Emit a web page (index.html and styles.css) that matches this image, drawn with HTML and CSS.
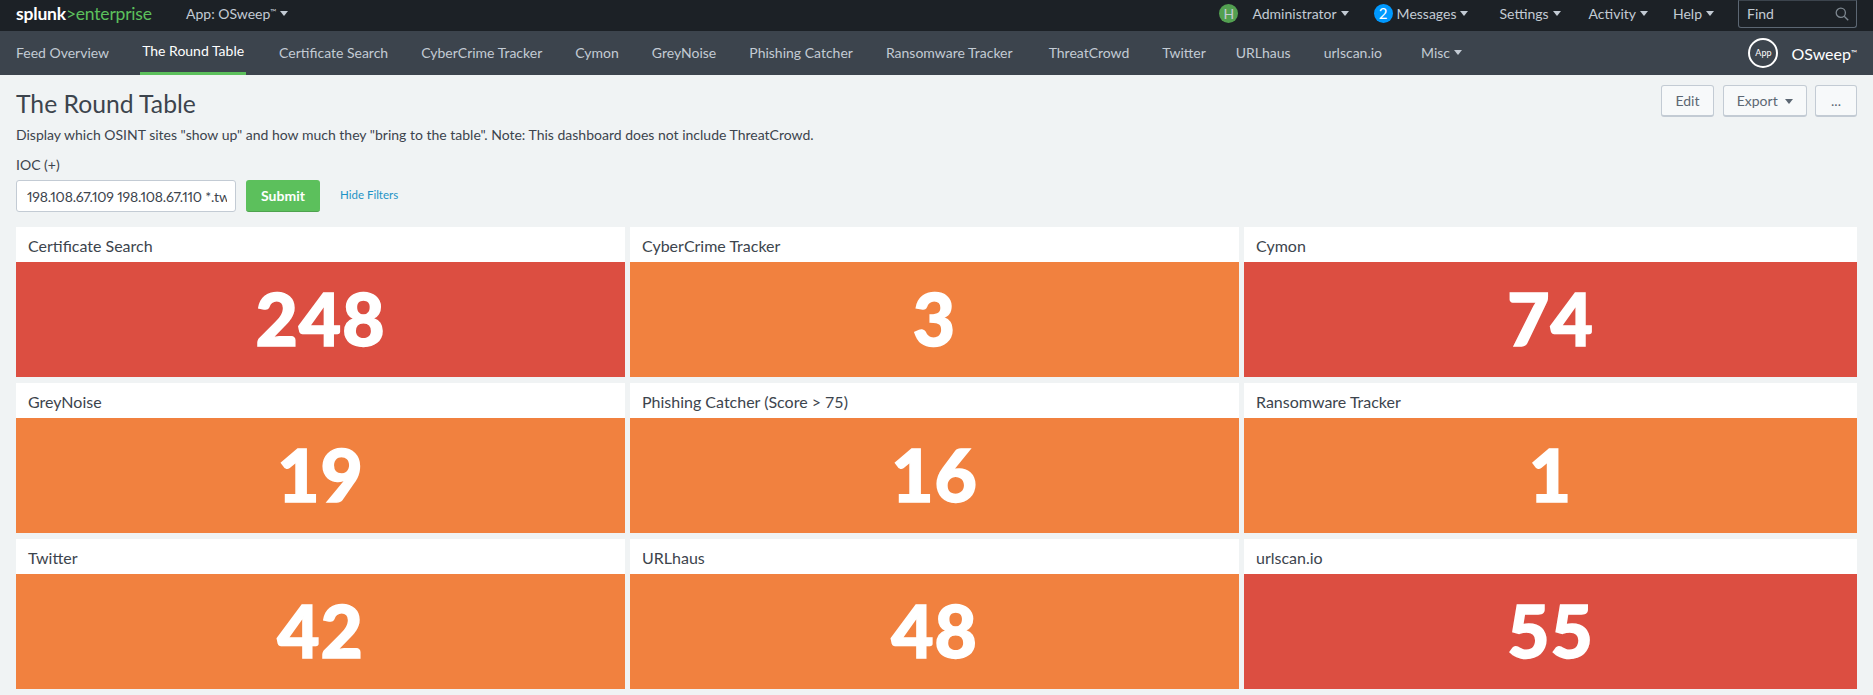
FILE: index.html
```html
<!DOCTYPE html>
<html lang="en">
<head>
  <meta charset="UTF-8" />
  <title>The Round Table | Splunk</title>
  <link rel="stylesheet" href="styles.css">
</head>
<body>
  <header class="topbar">
    <div class="brand"><span class="brand-splunk">splunk</span><span class="brand-rest">&gt;enterprise</span></div>
    <div class="top-item app-menu"><span>App: OSweep<span class="tm">™</span></span><i class="caret"></i></div>
    <div class="top-right">
      <div class="top-item user"><span class="avatar">H</span>Administrator<i class="caret"></i></div>
      <div class="top-item messages"><span class="badge">2</span>Messages<i class="caret"></i></div>
      <div class="top-item">Settings<i class="caret"></i></div>
      <div class="top-item activity">Activity<i class="caret"></i></div>
      <div class="top-item help">Help<i class="caret"></i></div>
      <div class="find">
        <span>Find</span>
        <svg width="14" height="14" viewBox="0 0 14 14" fill="none" stroke="#7d8790" stroke-width="1.3"><circle cx="5.8" cy="5.8" r="4.6"/><path d="M9.2 9.2l4 4"/></svg>
      </div>
    </div>
  </header>

  <nav class="appbar">
    <a>Feed Overview</a>
    <a class="active">The Round Table</a>
    <a>Certificate Search</a>
    <a>CyberCrime Tracker</a>
    <a>Cymon</a>
    <a>GreyNoise</a>
    <a>Phishing Catcher</a>
    <a class="wide">Ransomware Tracker</a>
    <a>ThreatCrowd</a>
    <a class="narrow">Twitter</a>
    <a>URLhaus</a>
    <a>urlscan.io</a>
    <a class="misc">Misc<i class="caret"></i></a>
    <div class="app-label"><span class="app-icon">App</span><span>OSweep<span class="tm">™</span></span></div>
  </nav>

  <main class="content">
    <div class="head-row">
      <div>
        <h1>The Round Table</h1>
        <p class="desc">Display which OSINT sites "show up" and how much they "bring to the table". Note: This dashboard does not include ThreatCrowd.</p>
      </div>
      <div class="actions">
        <button class="btn edit">Edit</button>
        <button class="btn export">Export <i class="caret dark"></i></button>
        <button class="btn more">...</button>
      </div>
    </div>

    <label class="ioc-label" for="ioc">IOC (+)</label>
    <div class="filters">
      <input id="ioc" type="text" value="198.108.67.109 198.108.67.110 *.twitter.com" />
      <button class="submit">Submit</button>
      <a class="hide-link">Hide Filters</a>
    </div>

    <section class="grid">
      <div class="panel"><h2>Certificate Search</h2><div class="value red">248</div></div>
      <div class="panel"><h2>CyberCrime Tracker</h2><div class="value orange">3</div></div>
      <div class="panel"><h2>Cymon</h2><div class="value red">74</div></div>
      <div class="panel"><h2>GreyNoise</h2><div class="value orange">19</div></div>
      <div class="panel"><h2>Phishing Catcher (Score &gt; 75)</h2><div class="value orange">16</div></div>
      <div class="panel"><h2>Ransomware Tracker</h2><div class="value orange">1</div></div>
      <div class="panel"><h2>Twitter</h2><div class="value orange">42</div></div>
      <div class="panel"><h2>URLhaus</h2><div class="value orange">48</div></div>
      <div class="panel"><h2>urlscan.io</h2><div class="value red">55</div></div>
    </section>
  </main>
</body>
</html>
```

FILE: styles.css
```css
* {
  box-sizing: border-box;
}
html, body {
  margin: 0;
  height: 100%;
}
body {
  background: #f0f3f4;
  color: #3c444d;
  font-family: Lato, "Open Sans", sans-serif;
  font-size: 14px;
  overflow: hidden;
}
.tm {
  position: relative;
  top: -4px;
  font-size: 8px;
}
.caret {
  display: inline-block;
  width: 0;
  height: 0;
  margin-left: 4px;
  vertical-align: 2px;
  border-left: 4px solid transparent;
  border-right: 4px solid transparent;
  border-top: 5px solid #c3cbd4;
}
.caret.dark {
  border-top-color: #5c6773;
}

/* top black bar */
.topbar {
  display: flex;
  align-items: center;
  height: 31px;
  padding: 0 16px 4px;
  background: #1c2126;
  color: #c3cbd4;
}
.brand {
  width: 170px;
  font-size: 17.5px;
  letter-spacing: -0.2px;
}
.brand-splunk {
  color: #fff;
  font-weight: 700;
}
.brand-rest {
  color: #5cc05c;
}
.top-right {
  display: flex;
  align-items: center;
  margin-left: auto;
}
.top-item {
  display: flex;
  align-items: center;
  white-space: nowrap;
}
.top-right .top-item {
  margin-right: 28px;
}
.top-right .top-item.user,
.top-right .top-item.activity {
  margin-right: 25px;
}
.top-right .top-item.messages {
  margin-right: 31px;
}
.top-right .top-item.help {
  margin-right: 24px;
}
.avatar, .badge {
  display: inline-block;
  width: 19px;
  height: 19px;
  border-radius: 50%;
  line-height: 19px;
  text-align: center;
}
.avatar {
  margin-right: 14px;
  background: #53a051;
  color: #c3cbd4;
}
.badge {
  margin-right: 4px;
  background: #0099ff;
  color: #fff;
  font-size: 15px;
}
.find {
  display: flex;
  align-items: center;
  justify-content: space-between;
  width: 119px;
  height: 28px;
  padding: 0 7px 0 8px;
  border: 1px solid #5c6773;
  border-top-color: #3c444d;
  border-radius: 0 0 3px 3px;
}

/* app nav */
.appbar {
  display: flex;
  align-items: stretch;
  height: 44px;
  padding: 0 16px;
  background: #3c444d;
  color: #c3cbd4;
}
.appbar a {
  display: flex;
  align-items: center;
  margin-right: 33px;
  padding-bottom: 2px;
  white-space: nowrap;
}
.appbar a.active {
  margin: 0 33px 0 -2px;
  padding: 0 2px 2px;
  border-bottom: 3px solid #5cc05c;
  color: #fff;
}
.appbar a.wide {
  margin-right: 36px;
}
.appbar a.narrow {
  margin-right: 30px;
}
.appbar a.misc {
  margin-left: 6px;
}
.app-label {
  display: flex;
  align-items: center;
  gap: 13px;
  margin-left: auto;
  color: #fff;
  font-size: 16px;
}
.app-icon {
  width: 30px;
  height: 30px;
  border: 2px solid #fff;
  border-radius: 50%;
  font-size: 9px;
  line-height: 26px;
  text-align: center;
}

/* dashboard */
.content {
  padding: 10px 16px 0;
}
.head-row {
  display: flex;
  justify-content: space-between;
}
h1 {
  margin: 5px 0 0;
  font-size: 24.7px;
  font-weight: 400;
  line-height: 28px;
}
.desc {
  margin: 8px 0 0;
  font-size: 14px;
  line-height: 18px;
}
.actions {
  display: flex;
  height: 32px;
}
.btn {
  padding: 0;
  border: 1px solid #c3cbd4;
  border-bottom-width: 2px;
  border-radius: 3px;
  background: #f7f9fa;
  color: #5c6773;
  font: 14px Lato, sans-serif;
}
.edit {
  width: 53px;
}
.export {
  width: 84px;
  margin: 0 8px 0 9px;
}
.more {
  width: 42px;
}
.ioc-label {
  display: block;
  margin-top: 12px;
  font-size: 14px;
  line-height: 18px;
}
.filters {
  display: flex;
  align-items: center;
  margin-top: 6px;
}
.filters input {
  width: 220px;
  height: 32px;
  padding: 0 8px 0 10px;
  border: 1px solid #c3cbd4;
  border-radius: 3px;
  background: #fff;
  color: #3c444d;
  font: 14px Lato, sans-serif;
  font-variant-numeric: proportional-nums;
  letter-spacing: -0.2px;
}
.submit {
  width: 74px;
  height: 32px;
  margin-left: 10px;
  border: 0;
  border-bottom: 1px solid #4ea24e;
  border-radius: 3px;
  background: #5cc05c;
  color: #fff;
  font: 700 14px Lato, sans-serif;
}
.hide-link {
  margin-left: 20px;
  padding-bottom: 3px;
  color: #1e93c6;
  font-size: 11.5px;
}
.grid {
  display: grid;
  grid-template-columns: 609px 609px 613px;
  grid-auto-rows: 150px;
  gap: 6px 5px;
  margin-top: 15px;
}
.panel {
  display: flex;
  flex-direction: column;
  background: #fff;
}
.panel h2 {
  height: 35px;
  margin: 0;
  padding: 3px 12px 0;
  font-size: 16px;
  font-weight: 400;
  line-height: 32px;
}
.value {
  flex: 1;
  color: #fff;
  font-size: 73px;
  font-weight: 900;
  line-height: 112px;
  letter-spacing: 1px;
  text-align: center;
  -webkit-text-stroke: 1.5px #fff;
}
.red {
  background: #dc4e41;
}
.orange {
  background: #f1813f;
}
```
